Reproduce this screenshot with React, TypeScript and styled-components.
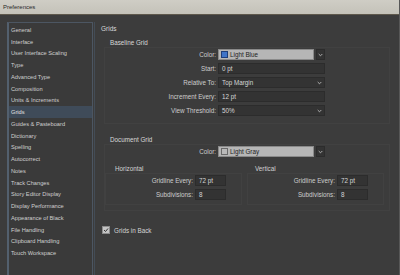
import React from "react";
import styled, { createGlobalStyle } from "styled-components";

const Global = createGlobalStyle`
  html, body { margin: 0; padding: 0; background: #3c3c3c; }
  body { font-family: "Liberation Sans", "DejaVu Sans", sans-serif; }
  * { box-sizing: border-box; }
`;

const Window = styled.div`
  width: 400px;
  height: 275px;
  overflow: hidden;
  display: flex;
  flex-direction: column;
  background: #3c3c3c;
  border-right: 1px solid #575757;
  font-size: 6.3px;
  color: #d2d2d2;
`;

const TitleBar = styled.div`
  height: 15px;
  flex: none;
  display: flex;
  align-items: center;
  padding-left: 3px;
  background: linear-gradient(#cfcdc5, #c4c2b9);
  border-bottom: 1px solid #5e584c;
  color: #2a2a2a;
  font-size: 6px;
`;

const Body = styled.div`
  flex: 1;
  display: flex;
  padding-top: 7px;
  min-height: 0;
`;

const Sidebar = styled.div`
  width: 86px;
  margin-left: 7px;
  height: 260px;
  border: 1px solid #4c5662;
  border-left: 2px solid #53606e;
  background: #3a3a3a;
  padding-top: 1px;
  display: flex;
  flex-direction: column;
  font-size: 5.7px;
`;

const Item = styled.div<{ $active?: boolean }>`
  height: 11.76px;
  flex: none;
  display: flex;
  align-items: center;
  padding-left: 2px;
  white-space: nowrap;
  background: ${(p) => (p.$active ? "#3f4b59" : "transparent")};
  color: ${(p) => (p.$active ? "#e2e2e2" : "#cfcfcf")};
`;

const Content = styled.div`
  flex: 1;
  margin-left: 1px;
  border-left: 1px solid #434c56;
  padding: 2px 0 0 6px;
  display: flex;
  flex-direction: column;
`;

const Heading = styled.div`
  height: 9px;
  line-height: 9px;
  font-size: 6.5px;
  color: #d8d8d8;
`;

const SectionTitle = styled.div<{ $top: number }>`
  margin-top: ${(p) => p.$top}px;
  padding-left: 9px;
  height: 9px;
  line-height: 9px;
  font-size: 6.3px;
  color: #d8d8d8;
`;

const GroupBox = styled.div<{ $pad: string }>`
  margin-left: 3px;
  width: 286px;
  border: 1px solid #414141;
  padding: ${(p) => p.$pad};
  display: flex;
  flex-direction: column;
  gap: 3px;
`;

const Row = styled.div<{ $label: number }>`
  display: grid;
  grid-template-columns: ${(p) => p.$label}px auto;
  column-gap: 2px;
  align-items: center;
  height: 11px;
`;

const Label = styled.div`
  text-align: right;
  white-space: nowrap;
  color: #cdcdcd;
`;

const Field = styled.div<{ $w: number }>`
  width: ${(p) => p.$w}px;
  height: 11px;
  background: #333333;
  border: 1px solid #2c2c2c;
  display: flex;
  align-items: center;
  padding-left: 3px;
  color: #d6d6d6;
  justify-content: space-between;
`;

const LightSelect = styled.div`
  display: flex;
  align-items: center;
  gap: 2px;
`;

const LightBox = styled.div`
  width: 96px;
  height: 11px;
  background: #b6b6b6;
  border: 1px solid #8a8a8a;
  display: flex;
  align-items: center;
  gap: 2px;
  padding-left: 2px;
  color: #222;
`;

const Swatch = styled.div<{ $c: string; $b: string }>`
  width: 7px;
  height: 7px;
  background: ${(p) => p.$c};
  border: 1px solid ${(p) => p.$b};
`;

const ChevBtn = styled.div<{ $inner?: boolean }>`
  width: 9px;
  height: ${(p) => (p.$inner ? 9 : 11)}px;
  background: #333;
  border: ${(p) => (p.$inner ? "none" : "1px solid #2c2c2c")};
  display: flex;
  align-items: center;
  justify-content: center;
`;

const Chevron = () => (
  <svg width="5" height="4" viewBox="0 0 5 4">
    <path d="M0.7 1 L2.5 2.8 L4.3 1" stroke="#bdbdbd" strokeWidth="0.9" fill="none" />
  </svg>
);

const SubRow = styled.div`
  display: flex;
  gap: 5px;
  margin-left: -1px;
`;

const SubBox = styled.div`
  width: 137px;
  border: 1px solid #414141;
  display: flex;
  flex-direction: column;
`;

const SubTitle = styled.div<{ $indent: number }>`
  margin-top: 4px;
  padding-left: ${(p) => p.$indent}px;
  height: 9px;
  line-height: 9px;
  font-size: 6.3px;
  color: #d2d2d2;
`;

const SubRows = styled.div`
  display: flex;
  flex-direction: column;
  gap: 3px;
  padding: 1px 0 4px 0;
`;

const CheckRow = styled.div`
  margin-top: 15px;
  display: flex;
  align-items: center;
  gap: 4px;
  padding-left: 1px;
  font-size: 6.3px;
  color: #d4d4d4;
`;

const Check = styled.div`
  width: 8px;
  height: 8px;
  background: #c4c4c4;
  border: 1px solid #8c8c8c;
  display: flex;
  align-items: center;
  justify-content: center;
`;

const items = [
  "General",
  "Interface",
  "User Interface Scaling",
  "Type",
  "Advanced Type",
  "Composition",
  "Units & Increments",
  "Grids",
  "Guides & Pasteboard",
  "Dictionary",
  "Spelling",
  "Autocorrect",
  "Notes",
  "Track Changes",
  "Story Editor Display",
  "Display Performance",
  "Appearance of Black",
  "File Handling",
  "Clipboard Handling",
  "Touch Workspace",
];

const SubGroup = ({ title, indent }: { title: string; indent: number }) => (
  <div>
    <SubTitle $indent={indent}>{title}</SubTitle>
    <SubBox>
      <SubRows>
        <Row $label={87}>
          <Label>Gridline Every:</Label>
          <Field $w={31}>72 pt</Field>
        </Row>
        <Row $label={87}>
          <Label>Subdivisions:</Label>
          <Field $w={31}>8</Field>
        </Row>
      </SubRows>
    </SubBox>
  </div>
);

export default function App() {
  return (
    <>
      <Global />
      <Window>
        <TitleBar>Preferences</TitleBar>
        <Body>
          <Sidebar>
            {items.map((t) => (
              <Item key={t} $active={t === "Grids"}>
                {t}
              </Item>
            ))}
          </Sidebar>
          <Content>
            <Heading>Grids</Heading>
            <SectionTitle $top={5}>Baseline Grid</SectionTitle>
            <GroupBox $pad="1px 0 7px 0">
              <Row $label={111}>
                <Label>Color:</Label>
                <LightSelect>
                  <LightBox>
                    <Swatch $c="#3f74c8" $b="#1e3f7a" />
                    Light Blue
                  </LightBox>
                  <ChevBtn>
                    <Chevron />
                  </ChevBtn>
                </LightSelect>
              </Row>
              <Row $label={111}>
                <Label>Start:</Label>
                <Field $w={107}>0 pt</Field>
              </Row>
              <Row $label={111}>
                <Label>Relative To:</Label>
                <Field $w={107}>
                  Top Margin
                  <ChevBtn $inner>
                    <Chevron />
                  </ChevBtn>
                </Field>
              </Row>
              <Row $label={111}>
                <Label>Increment Every:</Label>
                <Field $w={107}>12 pt</Field>
              </Row>
              <Row $label={111}>
                <Label>View Threshold:</Label>
                <Field $w={107}>
                  50%
                  <ChevBtn $inner>
                    <Chevron />
                  </ChevBtn>
                </Field>
              </Row>
            </GroupBox>
            <SectionTitle $top={11}>Document Grid</SectionTitle>
            <GroupBox $pad="1px 1px 5px 1px">
              <Row $label={110}>
                <Label>Color:</Label>
                <LightSelect>
                  <LightBox>
                    <Swatch $c="#b9b9b9" $b="#6a6a6a" />
                    Light Gray
                  </LightBox>
                  <ChevBtn>
                    <Chevron />
                  </ChevBtn>
                </LightSelect>
              </Row>
              <SubRow>
                <SubGroup title="Horizontal" indent={10} />
                <SubGroup title="Vertical" indent={8} />
              </SubRow>
            </GroupBox>
            <CheckRow>
              <Check>
                <svg width="6" height="6" viewBox="0 0 6 6">
                  <path d="M1 3 L2.5 4.5 L5 1.5" stroke="#333" strokeWidth="1" fill="none" />
                </svg>
              </Check>
              Grids in Back
            </CheckRow>
          </Content>
        </Body>
      </Window>
    </>
  );
}
